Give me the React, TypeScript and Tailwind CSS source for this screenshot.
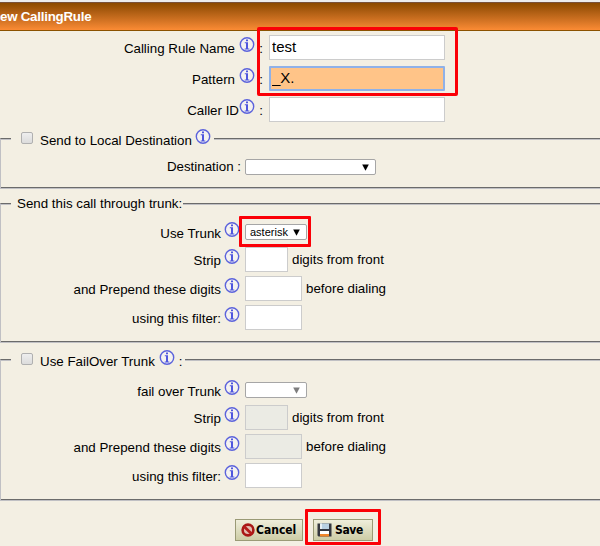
import type { ReactNode } from "react";

function InfoIcon({ className = "" }: { className?: string }) {
  return (
    <svg viewBox="0 0 16 16" className={`h-4 w-4 shrink-0 ${className}`}>
      <circle cx="8" cy="7.5" r="6.7" fill="#f4f2f0" stroke="#5c63dc" strokeWidth="1.4" />
      <path d="M7 2.4h2v1.9H7zM5.8 5.2H9v6.2h1.3v1.1H5.7v-1.1H7V6.3H5.8z" fill="#4f56de" />
    </svg>
  );
}

function TextBox({ className }: { className: string }) {
  return <input type="text" className={`h-[25px] shrink-0 border border-[#cccccc] outline-none ${className}`} />;
}

function SelectBox({ value = "", disabled = false, className }: { value?: string; disabled?: boolean; className: string }) {
  return (
    <div
      className={`mt-1 flex h-4 shrink-0 items-center justify-between rounded-[2px] border border-[#a6a6a6] bg-white pl-1 pr-1.5 text-[11px] leading-[14px] ${className}`}
    >
      <span>{value}</span>
      <svg viewBox="0 0 7 7" className="h-[7px] w-[7px]">
        <path d="M0.2 0.4H6.8L3.5 6.8z" fill={disabled ? "#7d7d7d" : "#000"} />
      </svg>
    </div>
  );
}

function TopRow({ label, tight = false, children }: { label: string; tight?: boolean; children: ReactNode }) {
  return (
    <div className="flex h-[31px] items-start">
      <span className={`mt-[6px] shrink-0 text-right ${tight ? "w-[239px]" : "w-[235px] mr-1"}`}>{label}</span>
      <InfoIcon className="mt-[2px]" />
      <span className="mt-[6px] w-[8px] shrink-0 text-right">:</span>
      <div className="ml-[6px]">{children}</div>
    </div>
  );
}

function TrunkRow({ label, suffix, first = false, children }: { label: string; suffix?: string; first?: boolean; children: ReactNode }) {
  return (
    <div className={`flex items-start ${first ? "h-[27px]" : "h-[29px]"}`}>
      <span className="mt-[6px] w-[221px] shrink-0 text-right">{label}</span>
      <InfoIcon className="ml-[3px] mr-[4px] mt-[2px]" />
      {children}
      {suffix && <span className="ml-1 mt-[5px]">{suffix}</span>}
    </div>
  );
}

function Group({ className, legend, children }: { className: string; legend: ReactNode; children: ReactNode }) {
  return (
    <section className={`border-b border-l border-t border-b-[#c0c0c4] border-l-[#c0c0c4] border-t-[#6b6b6b] ${className}`}>
      <div className="h-full border-b border-t border-b-[#6b6b6b] border-t-[#c0c0c4]">
        <div className="-mt-[11px] ml-[10px] flex h-[22px] w-fit items-start bg-[#f3efe3]">{legend}</div>
        {children}
      </div>
    </section>
  );
}

function CheckMark() {
  return (
    <span className="ml-[10px] mr-[7px] mt-[3px] h-3 w-3 shrink-0 rounded-[2px] border border-[#b0b0b0] bg-linear-to-b from-[#eeeeee] to-[#dcdcdc]" />
  );
}

const buttonClass =
  "flex h-[22px] items-center border border-[#9a9a76] bg-linear-to-b from-[#efeedb] to-[#cdcda6] font-['DejaVu_Sans_Condensed','DejaVu_Sans',sans-serif] text-[12px] font-bold leading-none text-black";

export default function App() {
  return (
    <main className="relative h-[546px] w-[600px] overflow-hidden bg-[#f3efe3] font-['Liberation_Sans',Arial,sans-serif] text-[13.33px] leading-4 text-black">
      <header className="h-[31px] border-b border-[#8b5200] bg-[#ececee] pt-[2px]">
        <div className="h-7 whitespace-nowrap border-t border-[#79513a] bg-linear-to-b from-[#8b4900] to-[#fb8b34] pt-[6px] font-bold tracking-[-0.25px] text-white">
          ew CallingRule
        </div>
      </header>

      <div className="h-[107px] pt-1">
        <TopRow label="Calling Rule Name">
          <input
            defaultValue="test"
            className="block h-[25px] w-[176px] border border-[#cccccc] bg-white pb-[2px] pl-[2px] text-[15px] outline-none"
          />
        </TopRow>
        <TopRow label="Pattern">
          <input
            defaultValue="_X."
            className="block h-[25px] w-[176px] rounded-[1px] border-2 border-[#8fb1e8] bg-[#ffc488] pb-[2px] pl-[1px] text-[15px] outline-none"
          />
        </TopRow>
        <TopRow label="Caller ID" tight>
          <input className="block h-[25px] w-[176px] border border-[#cccccc] bg-white outline-none" />
        </TopRow>
      </div>

      <Group
        className="h-[51px]"
        legend={
          <>
            <CheckMark />
            <span className="mt-[4px]">Send to Local Destination</span>
            <InfoIcon className="ml-[3px] mr-[3px]" />
          </>
        }
      >
        <div className="mt-[4px] flex items-start">
          <span className="mt-[4px] w-[240px] shrink-0 text-right">Destination :</span>
          <SelectBox className="ml-1 w-[131px]" />
        </div>
      </Group>

      <Group
        className="mt-[14px] h-[140px]"
        legend={<span className="ml-[6px] mr-[1px] mt-[2px]">Send this call through trunk:</span>}
      >
        <div className="-ml-px mt-[4px]">
          <TrunkRow label="Use Trunk" first>
            <SelectBox value="asterisk" className="ml-[1px] w-[62px]" />
          </TrunkRow>
          <TrunkRow label="Strip" suffix="digits from front">
            <TextBox className="ml-[1px] w-[43px] bg-white" />
          </TrunkRow>
          <TrunkRow label="and Prepend these digits" suffix="before dialing">
            <TextBox className="ml-[1px] w-[57px] bg-white" />
          </TrunkRow>
          <TrunkRow label="using this filter:">
            <TextBox className="ml-[1px] w-[57px] bg-white" />
          </TrunkRow>
        </div>
      </Group>

      <Group
        className="mt-[16px] h-[142px]"
        legend={
          <>
            <CheckMark />
            <span className="mt-[4px]">Use FailOver Trunk</span>
            <InfoIcon className="ml-[4px]" />
            <span className="ml-[4px] mr-[2px] mt-[4px]">:</span>
          </>
        }
      >
        <div className="-ml-px mt-[6px]">
          <TrunkRow label="fail over Trunk" first>
            <SelectBox disabled className="ml-[1px] w-[62px]" />
          </TrunkRow>
          <TrunkRow label="Strip" suffix="digits from front">
            <TextBox className="ml-[1px] w-[43px] bg-[#ebebe4]" />
          </TrunkRow>
          <TrunkRow label="and Prepend these digits" suffix="before dialing">
            <TextBox className="ml-[1px] w-[57px] bg-[#ebebe4]" />
          </TrunkRow>
          <TrunkRow label="using this filter:">
            <TextBox className="ml-[1px] w-[57px] bg-white" />
          </TrunkRow>
        </div>
      </Group>

      <div className="mt-[18px] flex gap-[10px] pl-[235px]">
        <button className={`${buttonClass} w-[68px] pl-[5px]`}>
          <svg viewBox="0 0 14 14" className="mr-[1px] h-[14px] w-[14px] shrink-0">
            <circle cx="7" cy="7" r="5.4" fill="#e3bdb0" stroke="#a91716" strokeWidth="2.6" />
            <path d="M3 3.4L10.8 11" stroke="#b51c1a" strokeWidth="2.8" />
          </svg>
          Cancel
        </button>
        <button className={`${buttonClass} w-[60px] pl-[3px] tracking-[-0.4px]`}>
          <svg viewBox="0 0 15 14" className="mr-[3px] h-[14px] w-[15px] shrink-0">
            <path d="M0.5 0.5H14.5V13.5H1.5L0.5 12.5z" fill="#34373f" />
            <path d="M3 0.5H12V6H3z" fill="#b9d1e2" />
            <path d="M3 0.5H5V6H3z" fill="#e8f0f4" />
            <path d="M3 8H12V11H3z" fill="#ffffff" />
            <path d="M3 11H12V13.5H3z" fill="#f1862a" />
          </svg>
          Save
        </button>
      </div>

      <div className="pointer-events-none absolute left-[257px] top-[27px] h-[69px] w-[201px] rounded-[2px] border-[3px] border-[#fb0007]" />
      <div className="pointer-events-none absolute left-[239px] top-[216px] h-[31px] w-[72px] rounded-[1px] border-[3px] border-[#fb0007]" />
      <div className="pointer-events-none absolute left-[305px] top-[509px] h-[36px] w-[76px] rounded-[1px] border-[3px] border-[#fb0007]" />
    </main>
  );
}
